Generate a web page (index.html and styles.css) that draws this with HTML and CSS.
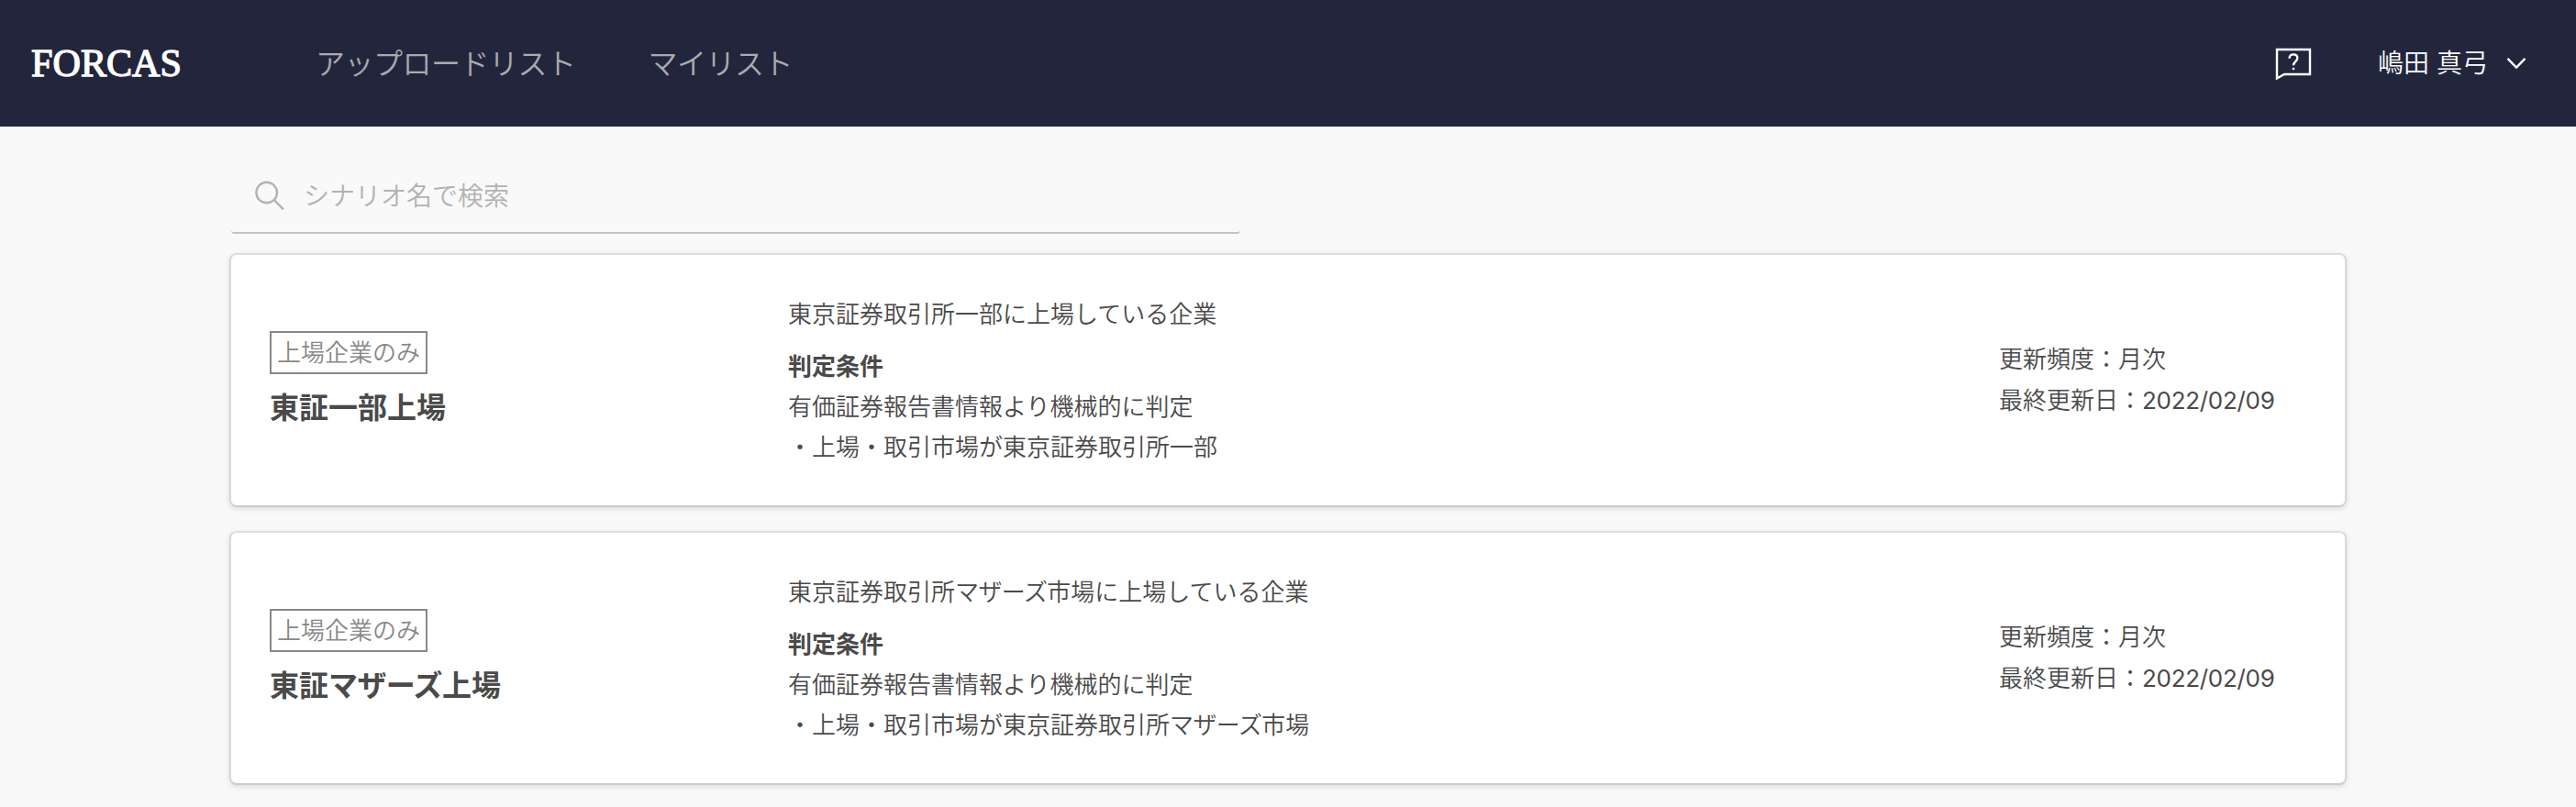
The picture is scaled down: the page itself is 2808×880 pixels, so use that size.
FILE: index.html
```html
<!DOCTYPE html>
<html lang="ja">

<head>
  <meta charset="UTF-8">
  <meta name="viewport" content="width=device-width, initial-scale=1.0">
  <title>FORCAS</title>
  <link rel="stylesheet" href="styles.css">
</head>

<body>

  <header class="header">
    <a class="logo">
      <svg width="176" height="60" viewBox="0 0 176 60">
        <text class="logo-text" x="0" y="43.5" textLength="164" lengthAdjust="spacingAndGlyphs">FORCAS</text>
      </svg>
    </a>
    <nav class="nav">
      <a>アップロードリスト</a>
      <a>マイリスト</a>
    </nav>
    <div class="user">
      <svg class="help" width="40" height="36" viewBox="0 0 40 36">
        <path d="M2 2H38V29H10L2 33.5Z" />
        <path d="M15.6 11.8C15.6 9 17.3 7.4 20 7.4C22.6 7.4 24.3 8.9 24.3 11.3C24.3 15 20 15.2 20 19.2" />
        <path d="M20 21.8V24.2" />
      </svg>
      <span class="name">嶋田 真弓</span>
      <svg class="arrow" width="22" height="14" viewBox="0 0 22 14">
        <path d="M1.5 1.8L11 11.5L20.5 1.8" />
      </svg>
    </div>
  </header>

  <main class="main">
    <div class="search">
      <svg class="search-icon" width="34" height="34" viewBox="0 0 34 34">
        <circle cx="13.7" cy="13" r="11.3" />
        <path d="M21.7 21L32 31.4" />
      </svg>
      <input type="text" placeholder="シナリオ名で検索">
    </div>

    <ul class="list">
      <li class="card">
        <div class="card-title">
          <span class="tag">上場企業のみ</span>
          <h2>東証一部上場</h2>
        </div>
        <div class="card-desc">
          <p class="lead">東京証券取引所一部に上場している企業</p>
          <h3>判定条件</h3>
          <p>有価証券報告書情報より機械的に判定</p>
          <p>・上場・取引市場が東京証券取引所一部</p>
        </div>
        <div class="card-date">
          <p>更新頻度：月次</p>
          <p>最終更新日：<span class="num">2022/02/09</span></p>
        </div>
      </li>
      <li class="card">
        <div class="card-title">
          <span class="tag">上場企業のみ</span>
          <h2>東証<span class="kana">マザーズ</span>上場</h2>
        </div>
        <div class="card-desc">
          <p class="lead">東京証券取引所<span class="kana">マザーズ</span>市場に上場している企業</p>
          <h3>判定条件</h3>
          <p>有価証券報告書情報より機械的に判定</p>
          <p>・上場・取引市場が東京証券取引所<span class="kana">マザーズ</span>市場</p>
        </div>
        <div class="card-date">
          <p>更新頻度：月次</p>
          <p>最終更新日：<span class="num">2022/02/09</span></p>
        </div>
      </li>
    </ul>
  </main>

</body>

</html>
```

FILE: styles.css
```css
* {
  margin: 0;
  padding: 0;
  box-sizing: border-box;
}

body {
  background-color: #f9f9f9;
  color: #4a4a4a;
  font-family: Inter, "Noto Sans CJK JP", sans-serif;
  font-size: 26px;
  font-weight: 350;
  line-height: 44px;
}

/* header */
.header {
  display: flex;
  align-items: center;
  height: 138px;
  padding: 0 54px 0 34px;
  background-color: #22263c;
}

.logo {
  display: block;
  width: 176px;
  height: 60px;
}

.logo svg {
  display: block;
}

.logo-text {
  font-family: "Liberation Serif", serif;
  font-size: 42px;
  font-weight: 400;
  fill: #fff;
  stroke: #fff;
  stroke-width: 1.3px;
}

.nav {
  display: flex;
  gap: 79px;
  margin-left: 134px;
  padding-top: 2px;
  font-size: 32px;
  letter-spacing: -.5px;
  color: #a9aab1;
}

.user {
  display: flex;
  align-items: center;
  margin-left: auto;
  color: #fff;
  font-size: 28px;
}

.help,
.arrow {
  fill: none;
  stroke: #fff;
  stroke-width: 2.4px;
}

.help {
  margin-top: 1px;
}

.name {
  margin: 0 20px 0 72px;
}

/* search */
.main {
  width: 2308px;
  margin: 0 auto;
}

.search {
  display: flex;
  align-items: center;
  width: 1100px;
  height: 87px;
  margin: 30px 0 0 2px;
  padding: 7px 0 0 25px;
  border-bottom: 2px solid #c4c4c4;
  border-radius: 4px;
}

.search-icon {
  fill: none;
  stroke: #b2b2b2;
  stroke-width: 2.4px;
}

.search input {
  flex: 1;
  margin-left: 20px;
  border: 0;
  outline: 0;
  background: none;
  font: inherit;
  font-size: 28px;
}

.search input::placeholder {
  color: #b2b2b2;
  opacity: 1;
}

/* cards */
.list {
  margin-top: 21px;
  list-style: none;
}

.card {
  display: flex;
  align-items: center;
  height: 277px;
  margin-bottom: 26px;
  padding: 2px 42px 0;
  border: 2px solid #d8d8d8;
  border-top-color: #dedede;
  border-bottom-color: #cccccc;
  border-radius: 8px;
  background-color: #fff;
  box-shadow: 0 2px 6px rgba(0, 0, 0, .12);
}

.card-title {
  width: 565px;
  margin-top: -3px;
}

.tag {
  display: block;
  width: 172px;
  height: 47px;
  border: 2px solid #888;
  color: #888;
  line-height: 43px;
  text-align: center;
}

.card-title h2 {
  margin-top: 15px;
  font-size: 32px;
  font-weight: 700;
}

.card-desc .lead {
  margin-bottom: 13px;
}

.card-desc h3 {
  font-size: 26px;
  font-weight: 700;
}

.card-date {
  width: 335px;
  margin: -3px 0 0 auto;
  line-height: 45px;
}

/* katakana and digits are set a little tighter */
.kana {
  letter-spacing: -.6px;
}

.num {
  font-weight: 400;
  letter-spacing: -.3px;
}
```
